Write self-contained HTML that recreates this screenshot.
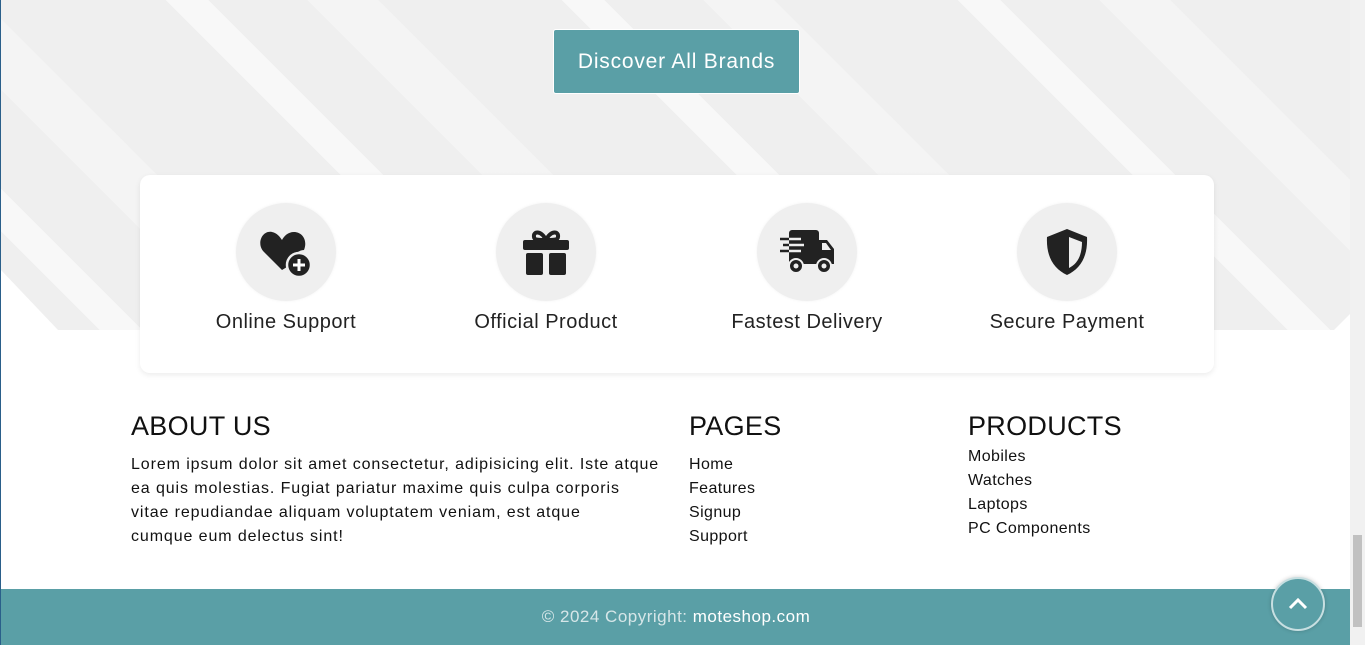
<!DOCTYPE html>
<html><head><meta charset="utf-8"><style>
*{margin:0;padding:0;box-sizing:border-box}
html,body{width:1365px;height:645px;overflow:hidden;background:#fff;font-family:"Liberation Sans",sans-serif;color:#222}
.page{position:absolute;left:0;top:0;width:1350px;height:645px;border-left:1px solid #2a5f8a;background:#fff}
.hero{position:absolute;left:0;top:0;width:1350px;height:330px;
background:
repeating-linear-gradient(45deg,rgba(255,255,255,0) 0 70px,rgba(255,255,255,.55) 70px 100px,rgba(255,255,255,0) 100px 170px,rgba(255,255,255,.3) 170px 220px,rgba(255,255,255,0) 220px 280px),
#efefef;
clip-path:polygon(0 0,1350px 0,1350px 313px,1333px 330px,57px 330px,0 270px)}
.btn{position:absolute;left:552px;top:29px;width:247px;height:65px;background:#5a9fa6;border:1px solid #fff;border-radius:3px;color:#fff;font-size:21px;letter-spacing:.8px;text-align:center;line-height:63px}
.card{position:absolute;left:139px;top:175px;width:1074px;height:198px;background:#fff;border-radius:10px;box-shadow:0 2px 6px rgba(0,0,0,.08)}
.f{position:absolute;top:28px;width:220px;text-align:center}
.circ{width:100px;height:98px;border-radius:50%;background:#efefef;margin:0 auto;display:flex;align-items:center;justify-content:center;box-shadow:0 0 3px rgba(0,0,0,.05)}
.f p{font-size:20px;letter-spacing:.5px;margin-top:10px;color:#222}
h3{position:absolute;top:411px;font-size:27px;font-weight:400;color:#111;letter-spacing:.3px}
.txt{position:absolute;font-size:16px;line-height:24px;color:#111;letter-spacing:.4px;white-space:nowrap}
.bar{position:absolute;left:0;top:589px;width:1350px;height:56px;background:#5a9fa6;text-align:center;line-height:56px;font-size:17px;letter-spacing:.5px;color:#d6e6e8}
.bar b{font-weight:400;color:#fff}
.top{position:absolute;left:1270px;top:577px;width:54px;height:54px;border-radius:50%;background:#5a9fa6;border:2px solid #c7dfe1;box-shadow:0 0 4px rgba(0,0,0,.2);display:flex;align-items:center;justify-content:center}
.sb{position:absolute;left:1350px;top:0;width:15px;height:645px;background:#f1f1f1}
.sb div{position:absolute;left:3px;top:535px;width:9px;height:92px;background:#c1c1c1}
</style></head><body>
<div class="page">
<div class="hero"></div>
<div class="btn">Discover All Brands</div>
<div class="card">
 <div class="f" style="left:36px"><div class="circ"><svg width="56" height="48" viewBox="0 0 56 48"><path d="M24 42 L6 24 C-2 16 4 2 14 4 C19 5 22 9 24 12 C26 8 30 4 36 4 C44 4 50 12 46 22 C40 22 34 28 34 36 Z" fill="#222"/><circle cx="41" cy="37" r="12" fill="#222" stroke="#efefef" stroke-width="2.5"/><path d="M41 31v12M35 37h12" stroke="#fff" stroke-width="3"/></svg></div><p>Online Support</p></div>
 <div class="f" style="left:296px"><div class="circ"><svg width="50" height="50" viewBox="0 0 50 50"><path d="M25 13 C20 3 12 4 13 10 C13 13 18 13 25 13 C32 13 37 13 37 10 C38 4 30 3 25 13Z" fill="none" stroke="#222" stroke-width="4"/><rect x="2" y="13" width="46" height="10" rx="2" fill="#222"/><rect x="5" y="26" width="17" height="22" rx="2" fill="#222"/><rect x="28" y="26" width="17" height="22" rx="2" fill="#222"/></svg></div><p>Official Product</p></div>
 <div class="f" style="left:557px"><div class="circ"><svg width="60" height="48" viewBox="0 0 60 48"><rect x="12" y="2" width="30" height="34" rx="3" fill="#222"/><path d="M42 12h8l7 9v15h-15z" fill="#222"/><path d="M45 15h4l5 7h-9z" fill="#efefef"/><path d="M2 11h22M5 17h22M2 23h22" stroke="#efefef" stroke-width="2.5"/><path d="M3 11h9M6 17h6M3 23h9" stroke="#222" stroke-width="2.5"/><circle cx="19" cy="38" r="7" fill="#222" stroke="#efefef" stroke-width="2"/><circle cx="19" cy="38" r="2.5" fill="#efefef"/><circle cx="47" cy="38" r="7" fill="#222" stroke="#efefef" stroke-width="2"/><circle cx="47" cy="38" r="2.5" fill="#efefef"/></svg></div><p>Fastest Delivery</p></div>
 <div class="f" style="left:817px"><div class="circ"><svg width="46" height="50" viewBox="0 0 46 50"><path d="M23 2 L43 10 C44 30 36 42 23 48 C10 42 2 30 3 10 Z" fill="#222"/><path d="M25 10 L38 15 C38 29 33 37 25 41Z" fill="#efefef"/></svg></div><p>Secure Payment</p></div>
</div>
<h3 style="left:130px">ABOUT US</h3>
<div class="txt" style="left:130px;top:453px;letter-spacing:.9px">Lorem ipsum dolor sit amet consectetur, adipisicing elit. Iste atque<br>ea quis molestias. Fugiat pariatur maxime quis culpa corporis<br>vitae repudiandae aliquam voluptatem veniam, est atque<br>cumque eum delectus sint!</div>
<h3 style="left:688px">PAGES</h3>
<div class="txt" style="left:688px;top:453px">Home<br>Features<br>Signup<br>Support</div>
<h3 style="left:967px">PRODUCTS</h3>
<div class="txt" style="left:967px;top:445px">Mobiles<br>Watches<br>Laptops<br>PC Components</div>
<div class="bar">© 2024 Copyright: <b>moteshop.com</b></div>
<div class="top"><svg width="20" height="14" viewBox="0 0 20 14"><path d="M2 11 L10 3 L18 11" fill="none" stroke="#fff" stroke-width="3"/></svg></div>
</div>
<div class="sb"><div></div></div>
</body></html>
